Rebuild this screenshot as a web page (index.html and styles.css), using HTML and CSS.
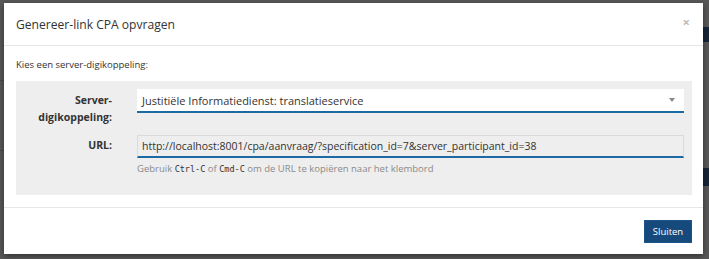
FILE: index.html
```html
<!DOCTYPE html>
<html lang="nl">
<head>
<meta charset="utf-8">
<title>Genereer-link CPA opvragen</title>
<link rel="stylesheet" href="styles.css">
</head>
<body>
<div class="backdrop">
  <div class="bg-bar bg-bar-1"></div>
  <div class="bg-bar bg-bar-2"></div>
  <div class="bg-line bg-line-1"></div>
  <div class="bg-line bg-line-2"></div>
</div>
<div class="modal">
  <div class="modal-header">
    <h4 class="modal-title">Genereer-link CPA opvragen</h4>
    <span class="close">×</span>
  </div>
  <div class="modal-body">
    <p class="intro">Kies een server-digikoppeling:</p>
    <div class="panel">
      <div class="row">
        <label class="label">Server-<br>digikoppeling:</label>
        <div class="field">
          <div class="select">
            <span>Justitiële Informatiedienst: translatieservice</span>
            <span class="caret"></span>
          </div>
        </div>
      </div>
      <div class="row row-url">
        <label class="label">URL:</label>
        <div class="field">
          <div class="input">http://localhost:8001/cpa/aanvraag/?specification_id=7&amp;server_participant_id=38</div>
          <p class="help">Gebruik <code>Ctrl-C</code> of <code>Cmd-C</code> om de URL te kopiëren naar het klembord</p>
        </div>
      </div>
    </div>
  </div>
  <div class="modal-footer">
    <button class="btn">Sluiten</button>
  </div>
</div>
</body>
</html>
```
FILE: styles.css
```css
* { box-sizing: border-box; }
html, body { margin: 0; padding: 0; }
body {
  width: 709px;
  height: 259px;
  background: #585858;
  font-family: "Open Sans", "Noto Sans", sans-serif;
  color: #333;
  position: relative;
  overflow: hidden;
}
.backdrop { position: absolute; inset: 0; }
.bg-bar {
  position: absolute;
  left: 703px;
  width: 6px;
  background: #17253a;
}
.bg-bar-1 { top: 27px; height: 15px; }
.bg-bar-2 { top: 168px; height: 18px; }
.bg-line {
  position: absolute;
  left: 0;
  width: 4px;
  height: 1px;
  background: #4a4a4a;
}
.bg-line-1 { top: 80px; }
.bg-line-2 { top: 150px; }

.modal {
  position: absolute;
  left: 4px;
  top: 3px;
  width: 699px;
  height: 251px;
  background: #fff;
  box-shadow: 0 2px 6px rgba(0,0,0,0.45);
  display: flex;
  flex-direction: column;
}
.modal-header {
  height: 43px;
  border-bottom: 1px solid #e6e6e6;
  display: flex;
  align-items: center;
  justify-content: space-between;
  padding: 0 13px 0 12px;
}
.modal-title {
  margin: 0;
  font-weight: 400;
  font-size: 12.1px;
  color: #333;
}
.close {
  color: #bbb;
  font-size: 13px;
  font-weight: 700;
  line-height: 1;
  margin-top: -4px;
}
.modal-body {
  padding: 12px 11px 12px 12px;
  height: 162px;
  border-bottom: 1px solid #e6e6e6;
}
.intro {
  margin: 0 0 10px 0;
  font-size: 9.5px;
  line-height: 13px;
  color: #333;
}
.panel {
  background: #eeeeee;
  height: 114px;
  padding: 8px 8px 0 0;
}
.row {
  display: flex;
  align-items: flex-start;
}
.label {
  width: 96px;
  text-align: right;
  font-size: 10.5px;
  font-weight: 700;
  line-height: 17px;
  color: #333;
  padding-top: 3px;
  flex-shrink: 0;
}
.field {
  margin-left: 25px;
  flex: 1;
}
.select {
  height: 24px;
  background: #fff;
  border-bottom: 2px solid #1d69a3;
  display: flex;
  align-items: center;
  justify-content: space-between;
  padding: 0 9px 0 5px;
  font-size: 11px;
  color: #333;
}
.caret {
  width: 0;
  height: 0;
  border-left: 3px solid transparent;
  border-right: 3px solid transparent;
  border-top: 4px solid #888;
}
.row-url { margin-top: 9px; }
.row-url .label { padding-top: 2px; }
.input {
  height: 23px;
  background: #eeeeee;
  border: 1px solid #dadada;
  border-bottom: 2px solid #1d69a3;
  padding: 0 4px;
  font-size: 10.5px;
  line-height: 20px;
  color: #333;
  white-space: nowrap;
}
.help {
  margin: 5px 0 0 0;
  font-size: 9.5px;
  color: #8a8a8a;
  line-height: 12px;
}
.help code {
  font-family: "DejaVu Sans Mono", monospace;
  font-size: 8.5px;
  color: #333;
}
.modal-footer {
  flex: 1;
  display: flex;
  justify-content: flex-end;
  align-items: center;
  padding: 0 11px 0 0;
}
.btn {
  width: 48px;
  height: 23px;
  background: #174a7c;
  border: 1px solid #1c5389;
  color: #fff;
  font-family: "Open Sans", "Noto Sans", sans-serif;
  font-size: 9.5px;
  padding: 0;
}
```
